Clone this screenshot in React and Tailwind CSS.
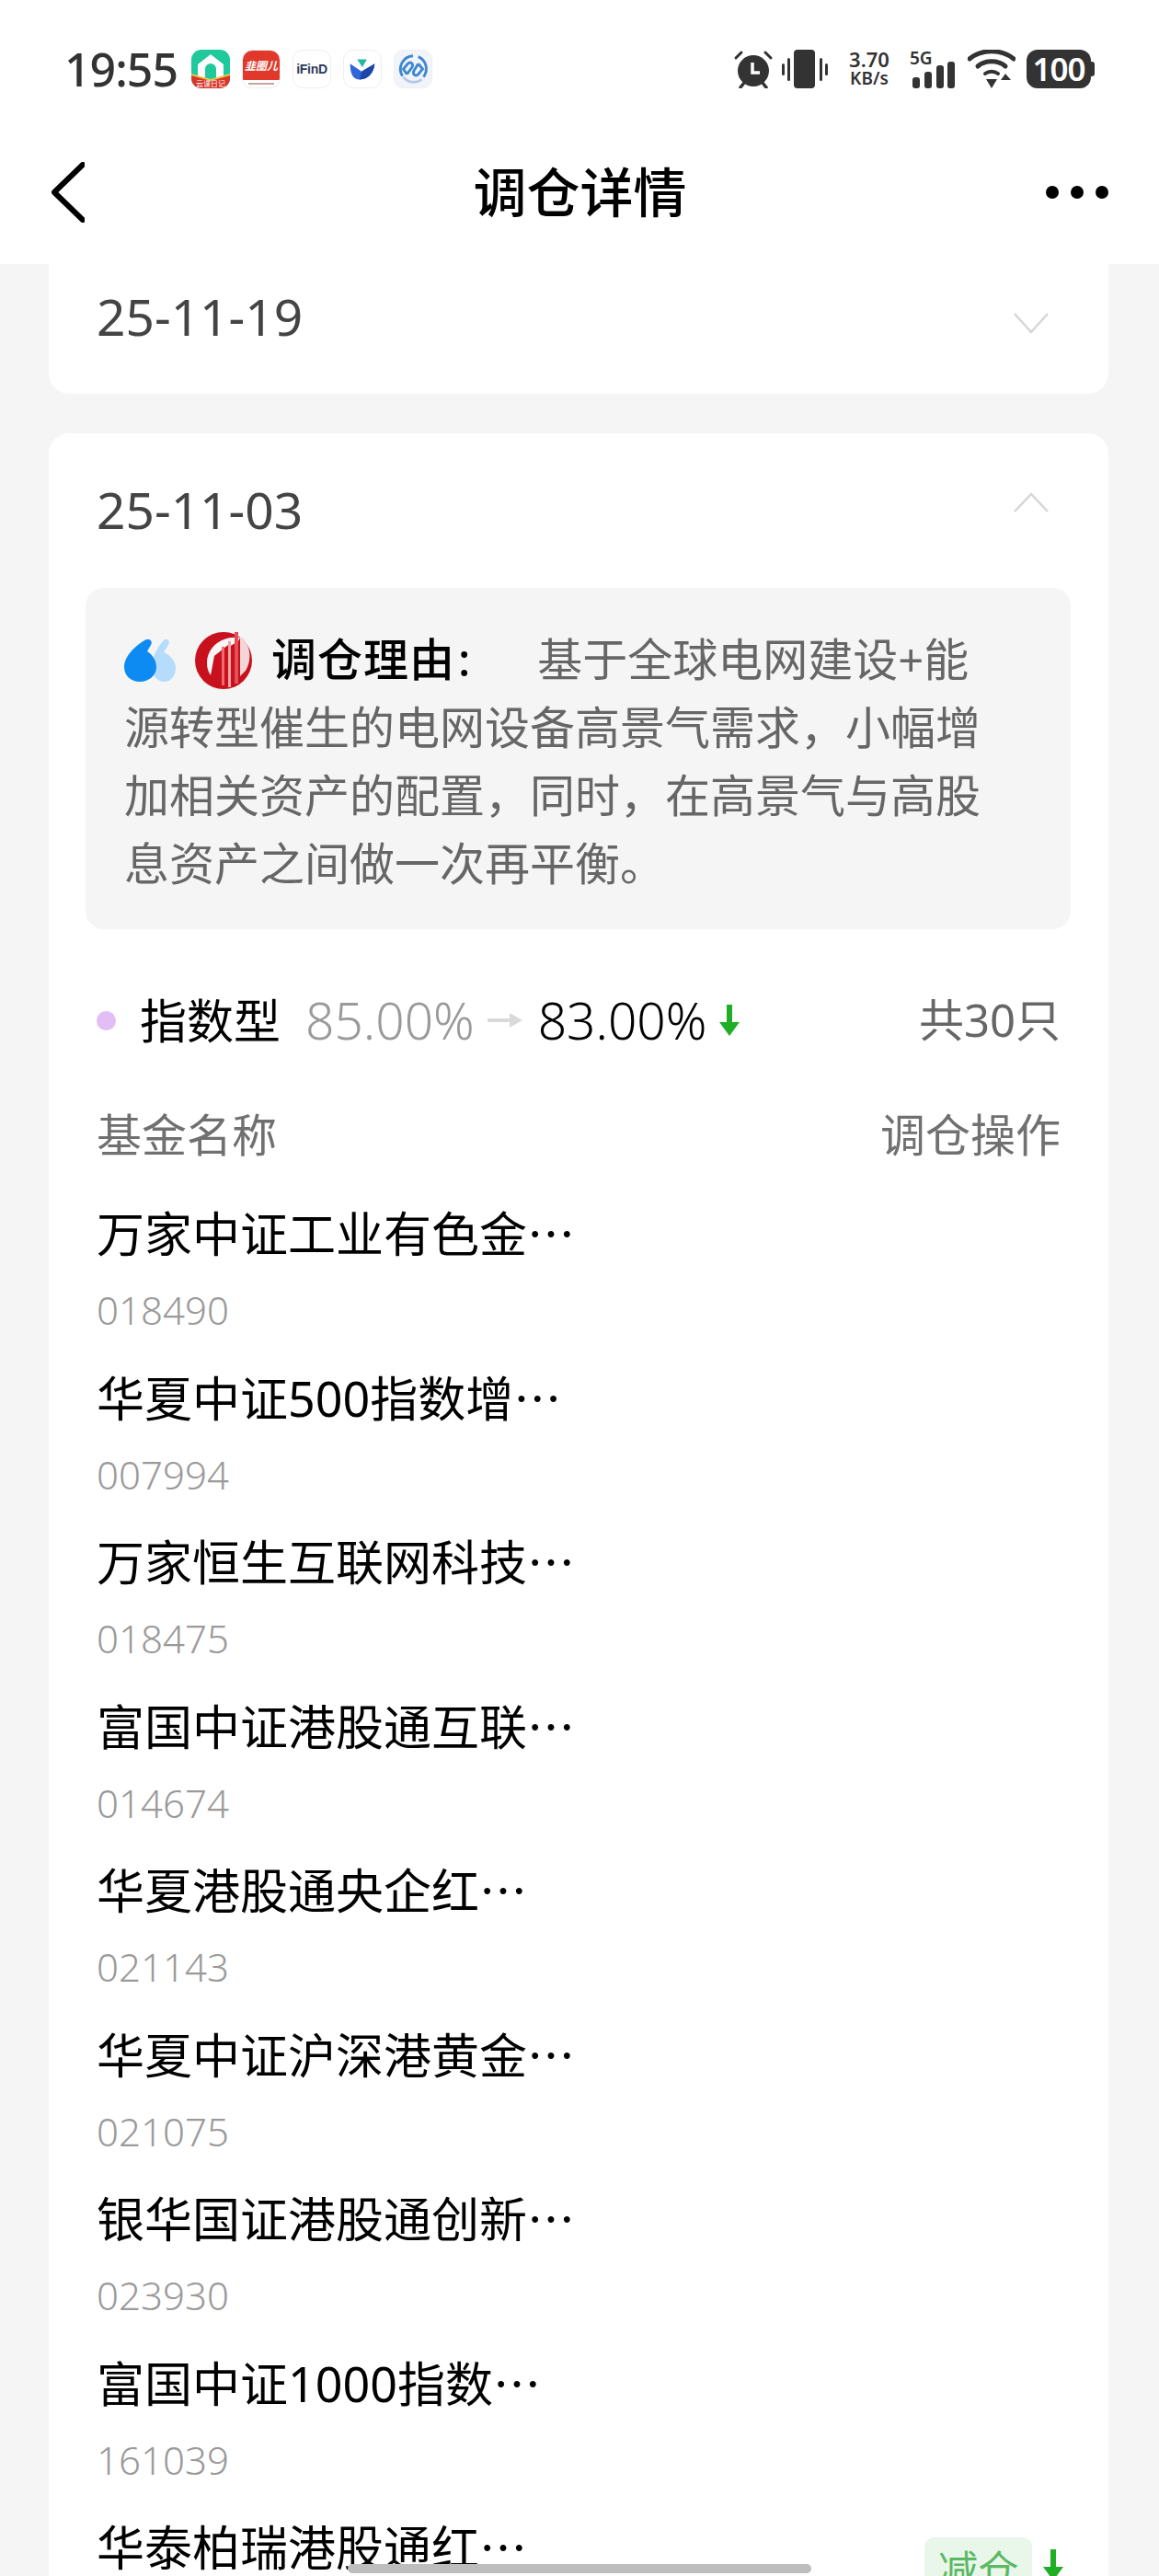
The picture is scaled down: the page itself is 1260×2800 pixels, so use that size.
const funds = [
  { name: "万家中证工业有色金", code: "018490" },
  { name: "华夏中证500指数增", code: "007994" },
  { name: "万家恒生互联网科技", code: "018475" },
  { name: "富国中证港股通互联", code: "014674" },
  { name: "华夏港股通央企红", code: "021143" },
  { name: "华夏中证沪深港黄金", code: "021075" },
  { name: "银华国证港股通创新", code: "023930" },
  { name: "富国中证1000指数", code: "161039" },
  { name: "华泰柏瑞港股通红", code: "", action: "减仓" },
];

const DownArrow = ({ className }) => (
  <svg viewBox="0 0 22 34" className={className} fill="#1fae24">
    <path d="M8 0h6v19h8L11 34 0 19h8z" />
  </svg>
);

const AppIcons = () => (
  <div className="flex gap-[13px] ml-[18px]">
    {/* 云课日记 */}
    <div className="w-[42px] h-[42px] rounded-[11px] overflow-hidden bg-[#1fc99b] relative">
      <svg viewBox="0 0 42 42" className="w-full h-full">
        <path d="M21 5 L35 16 V30 H27 V21 A6 6 0 0 0 15 21 V30 H7 V16Z" fill="#fff" />
        <path d="M0 27 L21 33 L42 27 V42 H0Z" fill="#d9362a" />
        <path d="M0 26 L21 32 L42 26 V28 L21 34 L0 28Z" fill="#e8c94a" />
      </svg>
      <div className="absolute bottom-[1px] left-0 right-0 text-center text-[8px] leading-[9px] text-white font-['Noto_Sans_CJK_SC']">
        云课日记
      </div>
    </div>
    {/* 韭圈儿 */}
    <div className="w-[42px] h-[42px] rounded-[11px] overflow-hidden bg-white border border-[#eeeeee] flex flex-col">
      <div className="h-[32px] bg-[#e0392b] text-white text-[12px] leading-[32px] text-center italic font-bold font-['Noto_Sans_CJK_SC'] whitespace-nowrap overflow-hidden">
        韭圈儿
      </div>
      <div className="h-[2px] mx-[6px] mt-[3px] bg-[#c9a5a0]" />
    </div>
    <div className="w-[42px] h-[42px] rounded-[11px] bg-white border border-[#eeeeee] flex items-center justify-center text-[14px] font-bold text-[#2d3a5c] font-['Liberation_Sans',sans-serif] tracking-[-0.3px]">
      iFinD
    </div>
    <div className="w-[42px] h-[42px] rounded-[11px] bg-white border border-[#eeeeee] flex items-center justify-center">
      <svg viewBox="0 0 42 42" className="w-full h-full">
        <path d="M15 10 H26 L21 19Z" fill="#1fb8a5" />
        <path d="M7 15 L20 24 L35 15 C34 26 27 33 18 33 C11 33 7 28 7 15Z" fill="#2f66d9" />
        <path d="M20 24 L35 15 C34 26 27 33 18 33Z" fill="#1c46a8" />
      </svg>
    </div>
    <div className="w-[42px] h-[42px] rounded-[11px] bg-[#f1f5fa] border border-[#eeeeee]">
      <svg viewBox="0 0 42 42" className="w-full h-full" fill="none" stroke="#3f87cf" strokeWidth="3">
        <path d="M27 7 A15 15 0 0 1 33 30" />
        <path d="M31 33 A15 15 0 0 1 10 30" stroke="#b6c9e6" />
        <path d="M9 29 A15 15 0 0 1 21 6" />
        <path d="M14 27 L10 21 L15 15 C18 12 22 15 20 19 L14 27" />
        <path d="M27 15 L32 21 L27 27 C24 30 20 27 22 23 L27 15" />
      </svg>
    </div>
  </div>
);

const StatusIcons = () => (
  <div className="flex items-center text-[#333333]">
    <svg viewBox="0 0 44 42" className="w-[44px] h-[42px]">
      <circle cx="22" cy="23" r="17" fill="#333" />
      <path d="M3 9 L9 3 M41 9 L35 3" stroke="#333" strokeWidth="3" strokeLinecap="round" />
      <path d="M8 41 L12 36 M36 41 L32 36" stroke="#333" strokeWidth="3.5" strokeLinecap="round" />
      <path d="M21 14 V25 H29" stroke="#fff" strokeWidth="3.5" fill="none" />
    </svg>
    <svg viewBox="0 0 50 42" className="w-[50px] h-[42px] ml-[9px]">
      <rect x="13" y="0" width="23" height="42" rx="4" fill="#333" />
      <rect x="0" y="15" width="3" height="13" rx="1.5" fill="#333" />
      <rect x="6" y="9" width="3" height="25" rx="1.5" fill="#333" />
      <rect x="41" y="9" width="3" height="25" rx="1.5" fill="#333" />
      <rect x="47" y="15" width="3" height="13" rx="1.5" fill="#333" />
    </svg>
    <div className="ml-[18px] w-[54px] font-['Noto_Sans',sans-serif] font-semibold text-center">
      <div className="text-[22px] leading-[21px]">3.70</div>
      <div className="text-[19px] leading-[21px] whitespace-nowrap">KB/s</div>
    </div>
    <div className="relative ml-[17px] w-[51px] h-[42px]">
      <div className="absolute left-0 top-[-2px] text-[19px] leading-[22px] font-semibold font-['Noto_Sans',sans-serif]">5G</div>
      <svg viewBox="0 0 51 42" className="w-[51px] h-[42px]">
        <rect x="3" y="30" width="8" height="12" rx="3" fill="#333" />
        <rect x="16" y="24" width="8" height="18" rx="3" fill="#333" />
        <rect x="29" y="17" width="8" height="25" rx="3" fill="#333" />
        <rect x="41" y="13" width="8" height="29" rx="3" fill="#333" />
      </svg>
    </div>
    <svg viewBox="0 0 52 42" className="w-[52px] h-[42px] ml-[12px]" fill="none" stroke="#333" strokeWidth="5" strokeLinecap="round">
      <path d="M2 10 C15 -1 37 -1 50 10" />
      <path d="M11 18 C19 11 33 11 41 18" />
      <path d="M19 26 C23 23 29 23 33 26" strokeWidth="4" />
      <path d="M20 32 H32 L26 42Z" fill="#333" stroke="none" />
      <path d="M36 33 L41 26 L47 33Z" fill="#333" stroke="none" />
    </svg>
    <div className="ml-[12px] flex items-center">
      <div className="w-[70px] h-[42px] rounded-[12px] bg-[#333333] text-white text-[35px] leading-[42px] text-center font-semibold font-['Noto_Sans',sans-serif] tracking-[-1px]">
        100
      </div>
      <div className="w-[4px] h-[16px] rounded-r-[3px] bg-[#333333]" />
    </div>
  </div>
);

const Chevron = ({ up }) => (
  <svg viewBox="0 0 40 28" className="w-[40px] h-[28px]" fill="none" stroke="#d6d6d6" strokeWidth="2.5">
    <path d={up ? "M2 25 L20 6 L38 25" : "M2 4 L20 24 L38 4"} />
  </svg>
);

const QuoteMark = () => (
  <svg viewBox="0 0 56 46" className="inline-block w-[56px] h-[46px] align-[-6px]">
    <path d="M44 0 C48 -1 50 3 48 6 L43 14 C51 18 56 24 56 31 C56 40 50 46 44 46 C36 46 30 39 30 30 C30 18 38 6 44 0Z" fill="#b5dcfb" />
    <path d="M24 0 C29 -1 31 3 29 6 L25 13 C31 17 35 23 35 30 C35 39 27 46 17 46 C7 46 0 39 0 30 C0 18 13 6 24 0Z" fill="#0d8bf2" />
  </svg>
);

const RedLogo = () => (
  <svg viewBox="0 0 64 64" className="inline-block w-[64px] h-[64px] align-[-14px] ml-[20px]">
    <circle cx="32" cy="33" r="31" fill="#c8111c" />
    <path d="M50 8 C30 6 14 18 14 36 C14 42 16 46 18 49 L22 28 L48 12Z" fill="#f6f6f6" />
    <path d="M22 28 L37 16 V60 L22 55Z" fill="#c8111c" />
    <rect x="30" y="18" width="3" height="42" fill="#ef6b72" />
    <rect x="37" y="12" width="3" height="50" fill="#f3a3a6" />
    <rect x="44" y="2" width="4" height="56" fill="#e2505a" />
    <path d="M50 8 L53 8 A31 31 0 0 1 56 44 L50 50Z" fill="#f4d5d6" />
  </svg>
);

const FundRow = ({ fund }) => (
  <div className="h-[178.5px] flex items-start justify-between">
    <div>
      <div className="h-[74px] text-[52px] leading-[74px] text-black whitespace-nowrap">
        {fund.name}
        <span className="font-['Noto_Sans_CJK_SC',sans-serif]">…</span>
      </div>
      <div className="mt-[20px] text-[42px] leading-[56px] font-light text-[#9a9a9a]">{fund.code}</div>
    </div>
    {fund.action && (
      <div className="mt-[28px] flex items-start mr-[-3px]">
        <div className="w-[117px] h-[80px] rounded-[10px] bg-[#e9f7ea] text-[#5bb863] text-[44px] leading-[70px] text-center">
          {fund.action}
        </div>
        <DownArrow className="w-[22px] h-[36px] ml-[12px] mt-[12px]" />
      </div>
    )}
  </div>
);

const App = () => {
  return (
    <div className="w-[1260px] h-[2800px] overflow-hidden relative bg-[#f5f5f5] font-['Noto_Sans','Noto_Sans_CJK_SC',sans-serif]">
      {/* Status bar + nav */}
      <header className="h-[287px] bg-white">
        <div className="h-[150px] pt-[54px] pl-[70px] pr-[70px] flex items-start justify-between">
          <div className="flex items-center h-[42px]">
            <span className="w-[120px] text-[50px] leading-[42px] font-medium text-[#333333] tracking-[-1px] whitespace-nowrap">19:55</span>
            <AppIcons />
          </div>
          <StatusIcons />
        </div>
        <div className="h-[118px] pl-[56px] pr-[55px] grid grid-cols-[1fr_auto_1fr] items-center">
          <svg viewBox="0 0 36 66" className="w-[36px] h-[66px]" fill="none" stroke="#000" strokeWidth="6" strokeLinecap="round" strokeLinejoin="round">
            <path d="M34 3 L3 33 L34 63" />
          </svg>
          <h1 className="text-[58px] leading-[118px] text-black font-medium">调仓详情</h1>
          <div className="flex gap-[13px] justify-end">
            <span className="w-[14px] h-[14px] rounded-full bg-black" />
            <span className="w-[14px] h-[14px] rounded-full bg-black" />
            <span className="w-[14px] h-[14px] rounded-full bg-black" />
          </div>
        </div>
      </header>

      <main className="pl-[53px] pr-[55px]">
        <section className="h-[141px] bg-white rounded-b-[22px] pl-[52px] pr-[64px] flex items-start justify-between">
          <span className="mt-[19px] text-[55px] leading-[76px] text-[#444444]">25-11-19</span>
          <div className="mt-[50px]"><Chevron /></div>
        </section>

        <section className="mt-[43px] bg-white rounded-t-[22px]">
          <div className="h-[168px] pl-[52px] pr-[64px] flex items-start justify-between">
            <span className="mt-[45px] text-[55px] leading-[76px] text-[#444444]">25-11-03</span>
            <div className="mt-[60px]"><Chevron up /></div>
          </div>

          <div className="ml-[40px] mr-[41px] h-[371px] rounded-[20px] bg-[#f5f5f5] pl-[42px] pr-[85px] pt-[40px] text-[49px] leading-[74px] text-[#666666]">
            <QuoteMark />
            <RedLogo />
            <span className="ml-[20px] font-medium text-black tracking-[1px]">调仓理由</span>
            <span className="font-medium text-black ml-[3px] mr-[73px]">:</span>
            基于全球电网建设+能源转型催生的电网设备高景气需求，小幅增加相关资产的配置，同时，在高景气与高股息资产之间做一次再平衡。
          </div>

          <div className="pl-[52px] pr-[52px]">
            <div className="mt-[62px] h-[74px] flex items-center justify-between">
              <div className="flex items-center">
                <span className="w-[21px] h-[21px] rounded-full bg-[#e3bdf5]" />
                <span className="ml-[26px] text-[51px] text-black">指数型</span>
                <span className="ml-[27px] text-[55px] font-light text-[#9a9a9a]">85.00%</span>
                <svg viewBox="0 0 38 16" className="w-[38px] h-[16px] ml-[14px]" fill="#d9d9d9">
                  <path d="M0 6h24V0l14 8-14 8v-6H0z" />
                </svg>
                <span className="ml-[17px] text-[55px] font-light text-black">83.00%</span>
                <DownArrow className="w-[22px] h-[34px] ml-[14px]" />
              </div>
              <span className="text-[49px] text-[#666666]">共30只</span>
            </div>

            <div className="mt-[51px] h-[74px] flex items-center justify-between text-[49px] text-[#707070]">
              <span>基金名称</span>
              <span>调仓操作</span>
            </div>

            <div className="mt-[31px]">
              {funds.map((fund) => (
                <FundRow key={fund.name} fund={fund} />
              ))}
            </div>
          </div>
        </section>
      </main>

      {/* home indicator */}
      <div className="absolute left-[378px] bottom-[3px] w-[504px] h-[10px] rounded-full bg-[#bdbdbd]" />
    </div>
  );
};

export default App;
